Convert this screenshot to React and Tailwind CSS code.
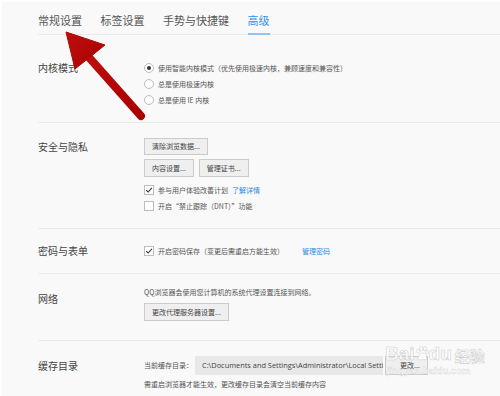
import React from "react";

const F = { fontFamily: '"Noto Sans CJK SC", "Noto Sans", sans-serif' };

function Radio({ checked, children }) {
  return (
    <div className="flex h-[16px] items-center gap-[4px]">
      <span className="flex h-[10px] w-[10px] items-center justify-center rounded-full border border-[#bdbdbd] bg-white">
        {checked && <span className="h-[4px] w-[4px] rounded-full bg-[#333]" />}
      </span>
      <span className="text-[7px] leading-none text-[#555]">{children}</span>
    </div>
  );
}

function Check({ checked, children }) {
  return (
    <div className="flex h-[16px] items-center gap-[4px]">
      <span className="flex h-[10px] w-[10px] items-center justify-center border border-[#bdbdbd] bg-white">
        {checked && (
          <svg width="8" height="8" viewBox="0 0 8 8">
            <path d="M1.2 4.2 L3.1 6 L6.9 1.8" fill="none" stroke="#333" strokeWidth="1.1" />
          </svg>
        )}
      </span>
      <span className="text-[7px] leading-none text-[#555]">{children}</span>
    </div>
  );
}

function Btn({ children, h = "h-[17px]" }) {
  return (
    <span className={`inline-flex ${h} items-center border border-[#cbcbcb] bg-[#efefef] px-[7px] text-[7px] leading-none text-[#444]`}>
      {children}
    </span>
  );
}

function Label({ children, h }) {
  return (
    <div className={`flex w-[106px] shrink-0 items-center ${h} text-[10px] leading-none text-[#444]`}>
      {children}
    </div>
  );
}

export default function App() {
  return (
    <div
      className="relative h-[396px] w-[500px] overflow-hidden border-l-2 border-t-2 border-white bg-[#f9f9f9]"
      style={F}
    >
      <div className="pl-[36px]">
        {/* tabs */}
        <div className="flex gap-[18.5px] border-b border-[#ebebeb]">
          <div className="-mb-px border-b-2 border-transparent pb-[6px] pt-[12px] text-[11px] leading-[13px] text-[#555]">常规设置</div>
          <div className="-mb-px border-b-2 border-transparent pb-[6px] pt-[12px] text-[11px] leading-[13px] text-[#555]">标签设置</div>
          <div className="-mb-px border-b-2 border-transparent pb-[6px] pt-[12px] text-[11px] leading-[13px] text-[#555]">手势与快捷键</div>
          <div className="-mb-px border-b-2 border-[#8fc3f2] pb-[6px] pt-[12px] text-[11px] leading-[13px] text-[#3b8ee6]">高级</div>
        </div>

        {/* 内核模式 */}
        <div className="flex border-b border-[#ebebeb] pb-[14px] pt-[25px]">
          <Label h="h-[16px]">内核模式</Label>
          <div className="flex flex-col">
            <Radio checked>使用智能内核模式（优先使用极速内核，兼顾速度和兼容性）</Radio>
            <Radio>总是使用极速内核</Radio>
            <Radio>总是使用 IE 内核</Radio>
          </div>
        </div>

        {/* 安全与隐私 */}
        <div className="flex border-b border-[#ebebeb] pb-[14px] pt-[15px]">
          <Label h="h-[17px]">安全与隐私</Label>
          <div className="flex flex-col">
            <div className="flex">
              <Btn>清除浏览数据...</Btn>
            </div>
            <div className="mt-[4px] flex gap-[5px]">
              <Btn h="h-[18px]">内容设置...</Btn>
              <Btn h="h-[18px]">管理证书...</Btn>
            </div>
            <div className="mt-[5px] flex flex-col">
              <Check checked>
                参与用户体验改善计划<span className="ml-[4px] text-[#2d8ae6]">了解详情</span>
              </Check>
              <Check>开启“禁止跟踪（DNT）”功能</Check>
            </div>
          </div>
        </div>

        {/* 密码与表单 */}
        <div className="flex border-b border-[#ebebeb] pb-[14px] pt-[14px]">
          <Label h="h-[16px]">密码与表单</Label>
          <Check checked>
            开启密码保存（变更后需重启方能生效）<span className="ml-[18px] text-[#2d8ae6]">管理密码</span>
          </Check>
        </div>

        {/* 网络 */}
        <div className="flex border-b border-[#ebebeb] pb-[19px] pt-[12px]">
          <Label h="h-[20px] pt-[6px]">网络</Label>
          <div className="flex flex-col">
            <div className="flex h-[13px] items-center text-[7px] leading-none text-[#555]">
              QQ浏览器会使用您计算机的系统代理设置连接到网络。
            </div>
            <div className="mt-[4px] flex">
              <Btn h="h-[18px]">更改代理服务器设置...</Btn>
            </div>
          </div>
        </div>

        {/* 缓存目录 */}
        <div className="flex pt-[15px]">
          <Label h="h-[19px]">缓存目录</Label>
          <div className="flex flex-col">
            <div className="flex h-[19px] items-center">
              <span className="w-[51px] text-[7px] leading-none text-[#555]">当前缓存目录：</span>
              <span className="flex h-[19px] w-[188px] items-center overflow-hidden whitespace-nowrap bg-[#e8e8e8] pl-[7px] text-[7.4px] leading-none text-[#444]" style={{ fontFamily: '"Open Sans", "Noto Sans", sans-serif' }}>
                C:\Documents and Settings\Administrator\Local Setti
              </span>
              <span className="ml-[2px] inline-flex h-[19px] w-[43px] items-center border border-[#cbcbcb] bg-[#efefef] pl-[14px] text-[7px] leading-none text-[#444]">
                更改...
              </span>
            </div>
            <div className="mt-[3px] text-[7px] leading-[12px] text-[#555]">
              需重启浏览器才能生效，更改缓存目录会清空当前缓存内容
            </div>
          </div>
        </div>
      </div>

      {/* Baidu watermark overlay */}
      <div className="pointer-events-none absolute left-[383px] top-[342px] flex w-[100px] flex-col items-start">
        <div className="flex flex-nowrap items-end whitespace-nowrap text-[19px] font-bold leading-none text-white/80 [-webkit-text-stroke:0.6px_#cfcfcf]" style={{ fontFamily: '"Liberation Sans", "Noto Sans CJK SC", sans-serif' }}>
          <span>Bai</span>
          <svg width="14" height="17" viewBox="0 0 18 20" className="mb-[1px]">
            <g fill="rgba(255,255,255,0.85)" stroke="#cfcfcf" strokeWidth="0.8">
              <ellipse cx="4" cy="7" rx="2" ry="2.6" />
              <ellipse cx="8" cy="3.5" rx="2" ry="2.6" />
              <ellipse cx="12.5" cy="3.8" rx="2" ry="2.6" />
              <ellipse cx="15.5" cy="8" rx="1.8" ry="2.4" />
              <path d="M4 16 C5 11 8 9.5 10 9.5 C12.5 9.5 15 12 15 16 C15 18.5 12 18.5 10 17.5 C8 18.5 4 19 4 16Z" />
            </g>
          </svg>
          <span>du</span>
          <span className="ml-[3px] text-[15px]" style={{ fontFamily: '"Noto Sans CJK SC", sans-serif' }}>经验</span>
        </div>
        <div className="mt-[3px] whitespace-nowrap pl-[2px] text-[9.5px] font-bold leading-none text-white/80 [-webkit-text-stroke:0.4px_#d6d6d6]" style={{ fontFamily: '"Liberation Sans", sans-serif' }}>
          jingyan.baidu.com
        </div>
      </div>

      {/* red arrow overlay */}
      <svg className="pointer-events-none absolute left-0 top-0" width="500" height="396" viewBox="0 0 500 396">
        <defs>
          <linearGradient id="ar" x1="0" y1="0" x2="1" y2="1">
            <stop offset="0" stopColor="#c00e0e" />
            <stop offset="1" stopColor="#a80000" />
          </linearGradient>
        </defs>
        <line x1="139" y1="114" x2="84" y2="52" stroke="url(#ar)" strokeWidth="8" strokeLinecap="round" />
        <polygon points="64,30 103,43 73,67" fill="url(#ar)" strokeLinejoin="round" stroke="#b00606" strokeWidth="1" />
      </svg>
    </div>
  );
}
